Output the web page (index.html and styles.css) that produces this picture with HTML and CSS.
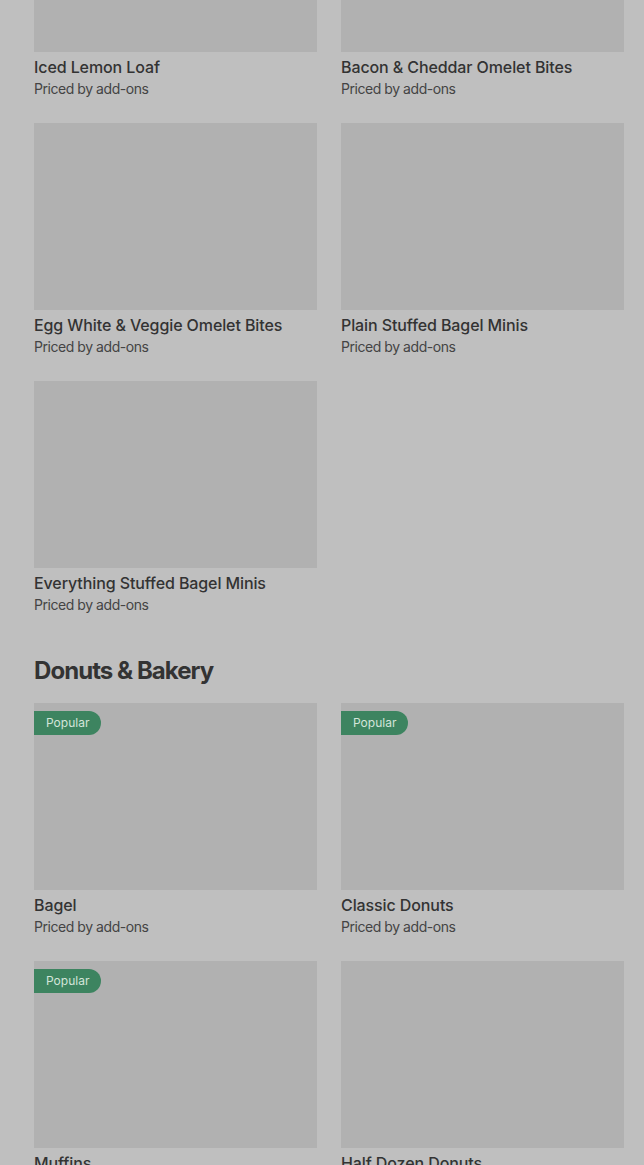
FILE: index.html
```html
<!DOCTYPE html>
<html>
<head>
<meta charset="utf-8">
<link rel="stylesheet" href="styles.css">
</head>
<body>
<main class="page">
  <section class="section">
    <div class="grid">
      <div class="card"><div class="thumb"></div><div class="name">Iced Lemon Loaf</div><div class="price">Priced by add-ons</div></div>
      <div class="card"><div class="thumb"></div><div class="name">Bacon &amp; Cheddar Omelet Bites</div><div class="price">Priced by add-ons</div></div>
      <div class="card"><div class="thumb"></div><div class="name">Egg White &amp; Veggie Omelet Bites</div><div class="price">Priced by add-ons</div></div>
      <div class="card"><div class="thumb"></div><div class="name">Plain Stuffed Bagel Minis</div><div class="price">Priced by add-ons</div></div>
      <div class="card"><div class="thumb"></div><div class="name">Everything Stuffed Bagel Minis</div><div class="price">Priced by add-ons</div></div>
    </div>
  </section>
  <section class="section">
    <h2 class="heading">Donuts &amp; Bakery</h2>
    <div class="grid">
      <div class="card"><div class="thumb"><span class="badge">Popular</span></div><div class="name">Bagel</div><div class="price">Priced by add-ons</div></div>
      <div class="card"><div class="thumb"><span class="badge">Popular</span></div><div class="name">Classic Donuts</div><div class="price">Priced by add-ons</div></div>
      <div class="card"><div class="thumb"><span class="badge">Popular</span></div><div class="name">Muffins</div><div class="price">Priced by add-ons</div></div>
      <div class="card"><div class="thumb"></div><div class="name">Half Dozen Donuts</div><div class="price">Priced by add-ons</div></div>
    </div>
  </section>
</main>
</body>
</html>
```
FILE: styles.css
```css
html, body {
  margin: 0;
  padding: 0;
  background: #bfbfbf;
  overflow: hidden;
}
body {
  font-family: Inter, Roboto, "Liberation Sans", sans-serif;
  color: #333333;
}
.page {
  margin-top: -135px;
  padding: 0 20px 0 34px;
}
.grid {
  display: grid;
  grid-template-columns: 283px 283px;
  column-gap: 24px;
  row-gap: 24px;
}
.card {
  display: flex;
  flex-direction: column;
}
.thumb {
  position: relative;
  height: 187px;
  background: #b1b1b1;
}
.badge {
  position: absolute;
  left: 0;
  top: 8px;
  height: 24px;
  line-height: 24px;
  padding: 0 12px;
  background: #3d8460;
  color: #d4e4da;
  font-size: 12px;
  border-radius: 0 12px 12px 0;
}
.name {
  margin-top: 5px;
  font-size: 16px;
  line-height: 20px;
  font-weight: 500;
  letter-spacing: -0.1px;
  color: #333333;
}
.price {
  margin-top: 2px;
  font-size: 14px;
  line-height: 20px;
  letter-spacing: -0.45px;
  color: #444444;
}
.heading {
  margin: 34px 0 0;
  height: 54px;
  font-size: 24px;
  font-weight: 700;
  letter-spacing: -0.95px;
  line-height: 44px;
  color: #333333;
}
```
